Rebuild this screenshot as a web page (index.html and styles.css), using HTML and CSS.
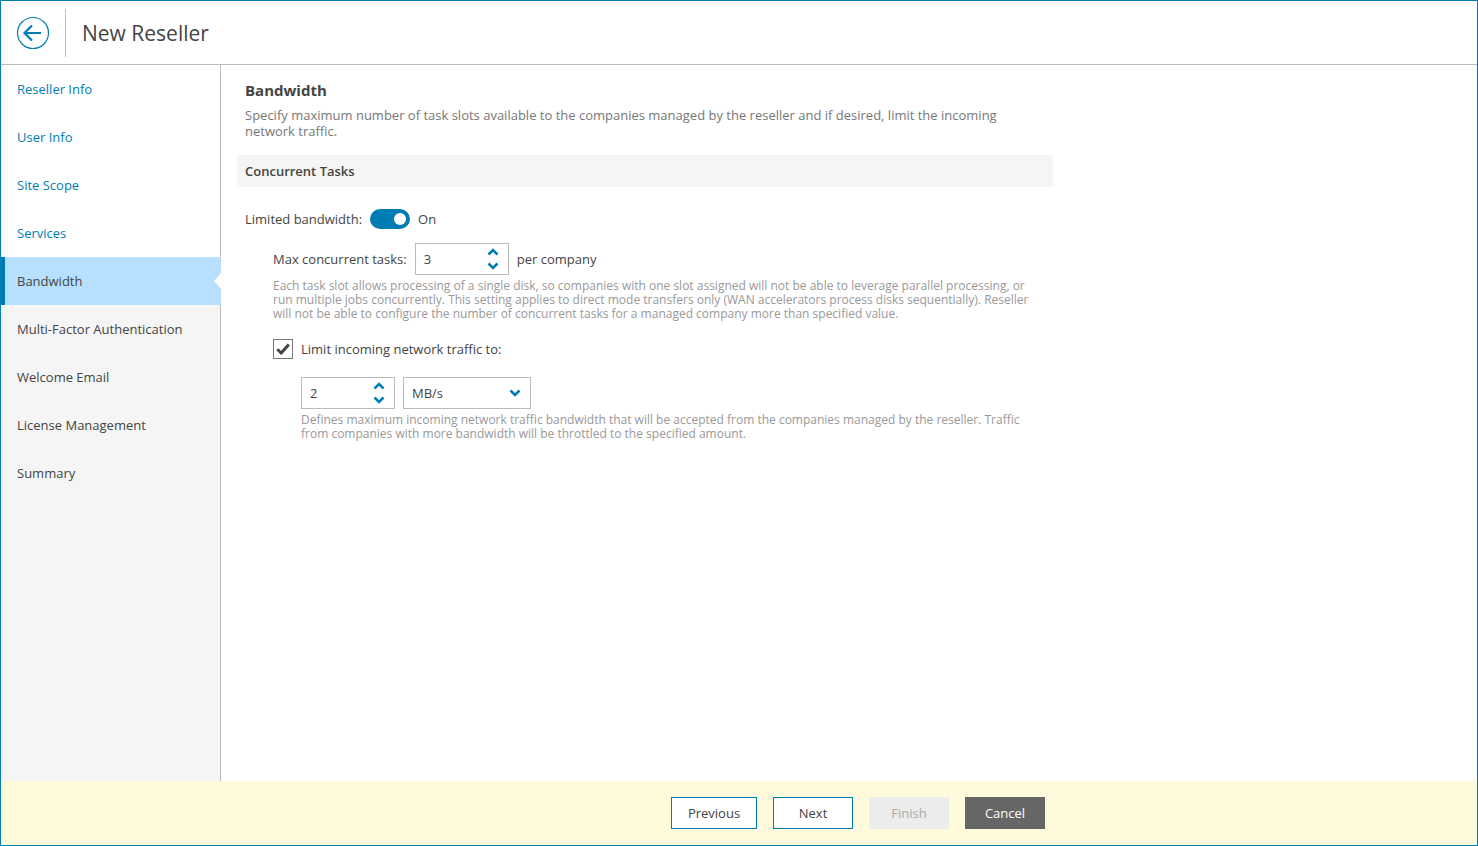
FILE: index.html
```html
<!DOCTYPE html>
<html lang="en">
<head>
<meta charset="utf-8">
<title>New Reseller</title>
<link rel="stylesheet" href="styles.css">
</head>
<body>
<div class="window">
  <header class="header">
    <button class="back" aria-label="Back">
      <svg width="34" height="34" viewBox="0 0 34 34" fill="none" stroke="#007cb4"><circle cx="17" cy="17" r="15.5" stroke-width="1.2"/><path d="M8.500 17H25M16 9.500L8.500 17l7.500 7.500" stroke-width="2.200"/></svg>
    </button>
    <h1 class="title">New Reseller</h1>
  </header>
  <div class="body">
    <nav class="nav">
      <a class="step done">Reseller Info</a>
      <a class="step done">User Info</a>
      <a class="step done">Site Scope</a>
      <a class="step done">Services</a>
      <a class="step active">Bandwidth</a>
      <a class="step">Multi-Factor Authentication</a>
      <a class="step">Welcome Email</a>
      <a class="step">License Management</a>
      <a class="step">Summary</a>
      <div class="nav-fill"></div>
    </nav>
    <main class="main">
      <div class="intro">
        <h2 class="heading">Bandwidth</h2>
        <p class="desc">Specify maximum number of task slots available to the companies managed by the reseller and if desired, limit the incoming network traffic.</p>
      </div>
      <div class="band">Concurrent Tasks</div>
      <div class="row row-toggle">
        <span>Limited bandwidth:</span>
        <span class="toggle"><span class="knob"></span></span>
        <span>On</span>
      </div>
      <div class="indent">
        <div class="row row-tasks">
          <span>Max concurrent tasks:</span>
          <span class="spin"><span class="val">3</span>
            <svg class="arrows" width="12" height="24" viewBox="0 0 12 24" fill="none" stroke="#007cb4" stroke-width="2.500"><path d="M1.500 7.500L6 3l4.500 4.500M1.500 16.500L6 21l4.500-4.500"/></svg>
          </span>
          <span>per company</span>
        </div>
        <p class="hint hint-tasks">Each task slot allows processing of a single disk, so companies with one slot assigned will not be able to leverage parallel processing, or run multiple jobs concurrently. This setting applies to direct mode transfers only (WAN accelerators process disks sequentially). Reseller will not be able to configure the number of concurrent tasks for a managed company more than specified value.</p>
        <div class="row row-check">
          <span class="check">
            <svg width="14" height="12" viewBox="0 0 14 12" fill="none" stroke="#444" stroke-width="3"><path d="M1.300 6.200L5.200 10 12.800 1.500"/></svg>
          </span>
          <span>Limit incoming network traffic to:</span>
        </div>
        <div class="sub">
          <div class="row row-limit">
            <span class="spin"><span class="val">2</span>
              <svg class="arrows" width="12" height="24" viewBox="0 0 12 24" fill="none" stroke="#007cb4" stroke-width="2.500"><path d="M1.500 7.500L6 3l4.500 4.500M1.500 16.500L6 21l4.500-4.500"/></svg>
            </span>
            <span class="select"><span>MB/s</span>
              <svg width="12" height="8" viewBox="0 0 12 8" fill="none" stroke="#007cb4" stroke-width="2.500"><path d="M1.500 1.500L6 6l4.500-4.500"/></svg>
            </span>
          </div>
          <p class="hint hint-limit">Defines maximum incoming network traffic bandwidth that will be accepted from the companies managed by the reseller. Traffic from companies with more bandwidth will be throttled to the specified amount.</p>
        </div>
      </div>
    </main>
  </div>
  <footer class="footer">
    <button class="btn btn-prev">Previous</button>
    <button class="btn">Next</button>
    <button class="btn btn-off">Finish</button>
    <button class="btn btn-cancel">Cancel</button>
  </footer>
</div>
</body>
</html>
```
FILE: styles.css
```css
* { box-sizing: border-box; }
html, body { margin: 0; height: 100%; }
body { font: 13px/16px "Open Sans", sans-serif; color: #444; background: #fff; }
.window { height: 846px; border: 1px solid #007cb4; display: flex; flex-direction: column; }
.header { height: 64px; flex: none; display: flex; align-items: center; border-bottom: 1px solid #bbb; }
.back { width: 65px; height: 48px; padding: 0 0 0 15px; margin-top: 1px; border: 0; border-right: 1px solid #bbb; background: none; display: flex; align-items: center; }
.title { margin: 1px 0 0 16px; font-size: 21px; line-height: 30px; font-weight: 400; color: #444; }
.body { flex: 1; display: flex; min-height: 0; }
.nav { width: 220px; flex: none; border-right: 1px solid #bbb; display: flex; flex-direction: column; }
.step { height: 48px; flex: none; display: flex; align-items: center; padding-left: 16px; background: #f5f5f5; position: relative; }
.step.done { background: #fff; color: #007cb4; }
.step.active { background: #b7dfff; border-left: 4px solid #007cb4; padding-left: 12px; margin-right: -1px; }
.step.active::after { content: ""; position: absolute; right: 0; top: 16px; width: 7px; height: 16px; background: #fff; clip-path: polygon(100% 0, 0 50%, 100% 100%); }
.nav-fill { flex: 1; background: #f5f5f5; }
.main { flex: 1; padding: 0 0 0 16px; min-width: 0; }
.intro { width: 816px; padding: 15px 8px 0; height: 90px; }
.heading { margin: 0 0 7px; font-size: 15px; line-height: 20px; font-weight: 700; color: #444; }
.desc { margin: 0; color: #777; }
.band { width: 816px; height: 32px; line-height: 32px; padding-left: 8px; background: #f5f5f5; font-weight: 600; }
.row { display: flex; align-items: center; }
.row-toggle { margin: 22px 0 0 8px; height: 20px; gap: 8px; }
.toggle { width: 40px; height: 20px; border-radius: 10px; background: #007cb4; position: relative; flex: none; }
.knob { position: absolute; right: 4px; top: 4px; width: 12px; height: 12px; border-radius: 50%; background: #fff; }
.indent { margin-left: 36px; width: 760px; }
.row-tasks { margin-top: 14px; height: 32px; gap: 8px; }
.spin { width: 94px; height: 32px; border: 1px solid #bbb; display: flex; align-items: center; justify-content: space-between; padding: 0 9px 0 8px; background: #fff; flex: none; }
.arrows { display: block; }
.hint { margin: 0; font-size: 12px; line-height: 14px; color: #999; }
.hint-tasks { margin-top: 4px; }
.row-check { margin-top: 18px; height: 20px; gap: 8px; }
.check { width: 20px; height: 20px; border: 1px solid #777; display: flex; align-items: center; justify-content: center; flex: none; }
.sub { margin-left: 28px; }
.row-limit { margin-top: 18px; gap: 8px; }
.select { width: 128px; height: 32px; border: 1px solid #bbb; display: flex; align-items: center; justify-content: space-between; padding: 0 9px 0 8px; }
.hint-limit { margin-top: 4px; }
.footer { height: 64px; flex: none; background: #fffadc; display: flex; align-items: center; justify-content: flex-end; gap: 16px; padding-right: 432px; }
.btn { width: 80px; height: 32px; padding: 0; font: 13px "Open Sans", sans-serif; color: #444; background: #fff; border: 1px solid #007cb4; }
.btn-prev { width: 86px; }
.btn-off { background: #ececec; border-color: #ececec; color: #aaa; }
.btn-cancel { background: #666; border-color: #666; color: #fff; }
```
